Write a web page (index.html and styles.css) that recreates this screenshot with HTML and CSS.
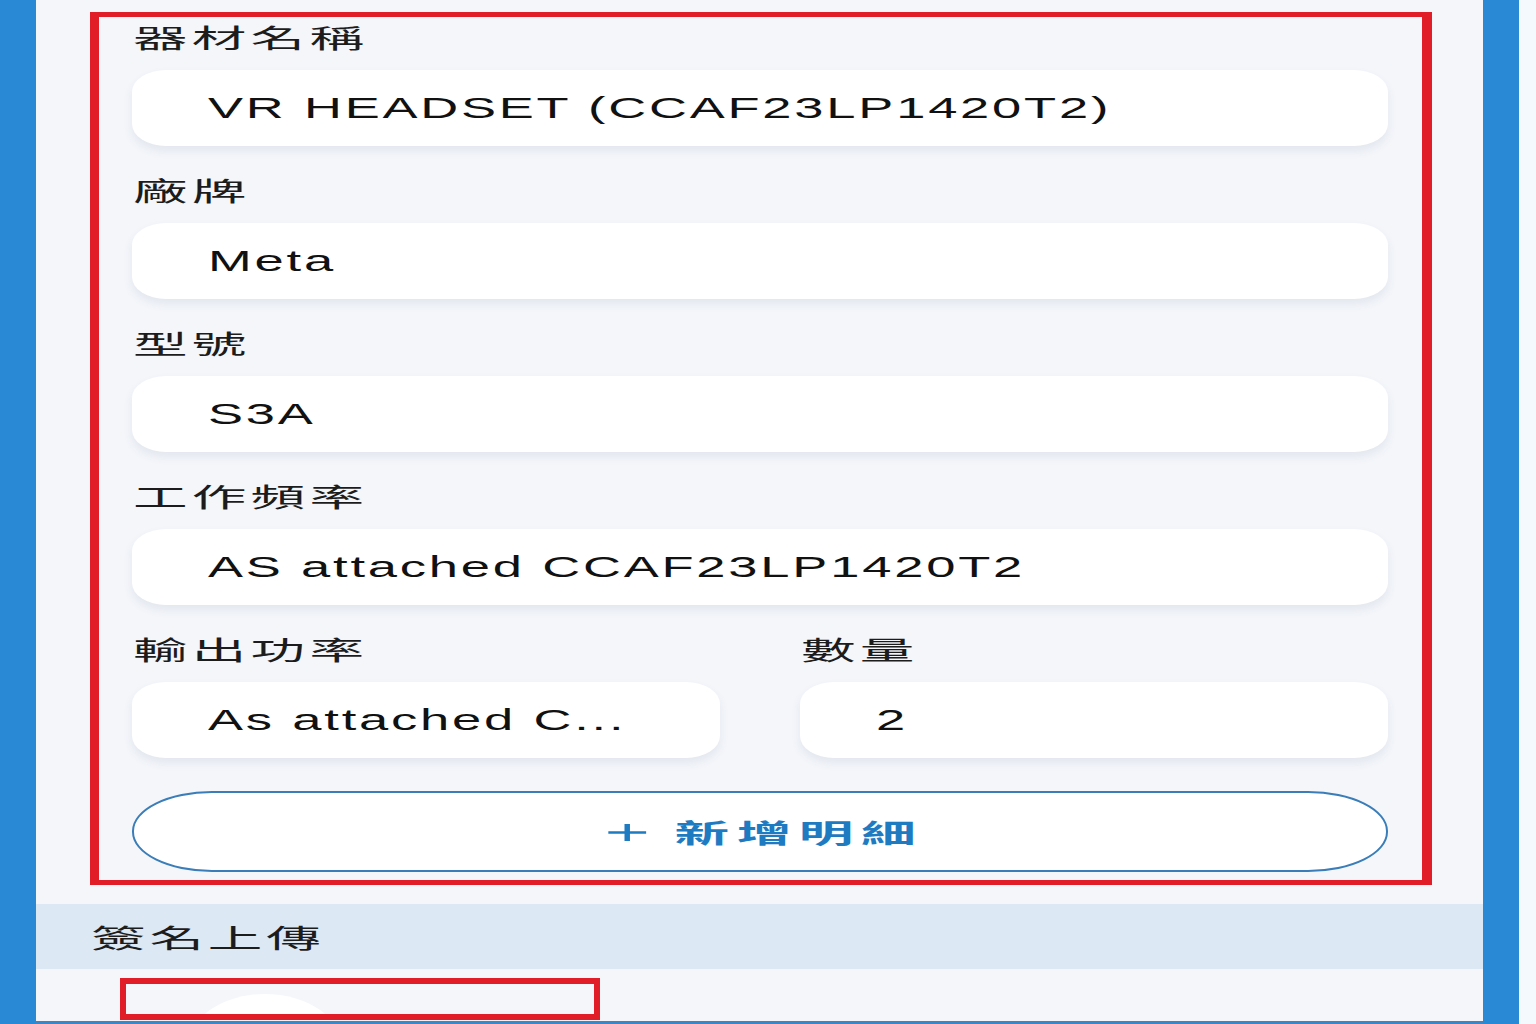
FILE: index.html
```html
<!DOCTYPE html>
<html lang="zh-Hant">
<head>
<meta charset="utf-8">
<title>器材明細</title>
<link rel="stylesheet" href="styles.css">
</head>
<body>
<div class="screen">
  <div class="strip"></div>
  <main class="panel">
    <section class="detail">
      <div class="field">
        <div class="label"><span class="sx">器材名稱</span></div>
        <div class="input"><span class="val">VR HEADSET (CCAF23LP1420T2)</span></div>
      </div>
      <div class="field">
        <div class="label"><span class="sx">廠牌</span></div>
        <div class="input"><span class="val">Meta</span></div>
      </div>
      <div class="field">
        <div class="label"><span class="sx">型號</span></div>
        <div class="input"><span class="val">S3A</span></div>
      </div>
      <div class="field">
        <div class="label"><span class="sx">工作頻率</span></div>
        <div class="input"><span class="val">AS attached CCAF23LP1420T2</span></div>
      </div>
      <div class="row2">
        <div class="field">
          <div class="label"><span class="sx">輸出功率</span></div>
          <div class="input"><span class="val">As attached C...</span></div>
        </div>
        <div class="field">
          <div class="label"><span class="sx">數量</span></div>
          <div class="input"><span class="val">2</span></div>
        </div>
      </div>
      <button class="add" type="button">
        <span class="add-inner">
          <svg class="plus" width="19" height="22" viewBox="0 0 19 22" aria-hidden="true">
            <path d="M0.5 11.5H18.5M9.5 3V20" stroke="#1f7bc1" stroke-width="2.6" fill="none"/>
          </svg>
          <span class="add-text">新增明細</span>
        </span>
      </button>
    </section>
    <div class="band"><span class="sx band-text">簽名上傳</span></div>
    <div class="sig-area">
      <div class="sig-box"><div class="circle"></div></div>
    </div>
  </main>
  <div class="strip"></div>
  <div class="edge"></div>
</div>
</body>
</html>
```
FILE: styles.css
```css
html, body {
  margin: 0;
  padding: 0;
}
body {
  width: 1536px;
  height: 1024px;
  overflow: hidden;
  background: #f3f9fc;
  font-family: "Liberation Sans", "Noto Sans CJK TC", sans-serif;
}
.screen {
  display: flex;
  height: 1024px;
}
.strip {
  width: 36px;
  flex: none;
  background: #2a89d5;
}
.edge {
  width: 17px;
  flex: none;
  background: #f3f9fc;
}
.panel {
  width: 1447px;
  flex: none;
  display: flex;
  flex-direction: column;
  background: #f4f6fa;
}
.detail {
  margin: 12px 0 0 54px;
  width: 1342px;
  box-sizing: border-box;
  border-style: solid;
  border-color: #e11d27;
  border-width: 5px 10px 5px 9px;
  padding: 2px 34px 8px 33px;
  display: flex;
  flex-direction: column;
  gap: 26px;
}
.field {
  display: flex;
  flex-direction: column;
}
.label {
  height: 36px;
  line-height: 36px;
  margin: 0 0 15px 1px;
  font-family: "Noto Sans CJK TC", sans-serif;
  font-size: 26px;
  color: #1c1c1c;
  letter-spacing: 2px;
}
.sx {
  display: inline-block;
  white-space: nowrap;
  transform: scaleX(2.1);
  transform-origin: 0 50%;
}
.input {
  height: 76px;
  background: #ffffff;
  border-radius: 34px / 22px;
  box-shadow: 0 5px 10px rgba(60, 80, 120, 0.09);
  display: flex;
  align-items: center;
  padding-left: 76px;
  overflow: hidden;
}
.val {
  display: inline-block;
  white-space: nowrap;
  font-size: 30px;
  letter-spacing: 1.6px;
  color: #111111;
  transform: scaleX(1.75);
  transform-origin: 0 50%;
}
.row2 {
  display: grid;
  grid-template-columns: 1fr 1fr;
  column-gap: 80px;
}
.add {
  margin-top: 7px;
  height: 81px;
  box-sizing: border-box;
  border: 2px solid #3a7db8;
  border-radius: 80px / 40px;
  background: #ffffff;
  display: flex;
  align-items: center;
  justify-content: center;
  padding: 0 0 0 10px;
  cursor: pointer;
}
.add-inner {
  display: inline-flex;
  align-items: center;
  transform: scaleX(2.1);
  transform-origin: 50% 50%;
}
.plus {
  display: block;
  margin-right: 13px;
}
.add-text {
  font-family: "Noto Sans CJK TC", sans-serif;
  font-size: 26px;
  font-weight: 700;
  letter-spacing: 3.6px;
  color: #1f7bc1;
}
.band {
  margin-top: 19px;
  height: 65px;
  background: #dde8f5;
  display: flex;
  align-items: center;
  padding-left: 55px;
}
.band-text {
  font-family: "Noto Sans CJK TC", sans-serif;
  font-size: 26px;
  letter-spacing: 1.8px;
  color: #1c1c1c;
}
.sig-area {
  flex: 1;
  border-bottom: 3px solid #3c86c7;
  overflow: hidden;
}
.sig-box {
  margin: 9px 0 0 84px;
  width: 480px;
  height: 42px;
  box-sizing: border-box;
  border: 6px solid #e11d27;
  overflow: hidden;
}
.circle {
  margin: 10px 0 0 61px;
  width: 156px;
  height: 110px;
  border-radius: 50%;
  background: #ffffff;
}
```
